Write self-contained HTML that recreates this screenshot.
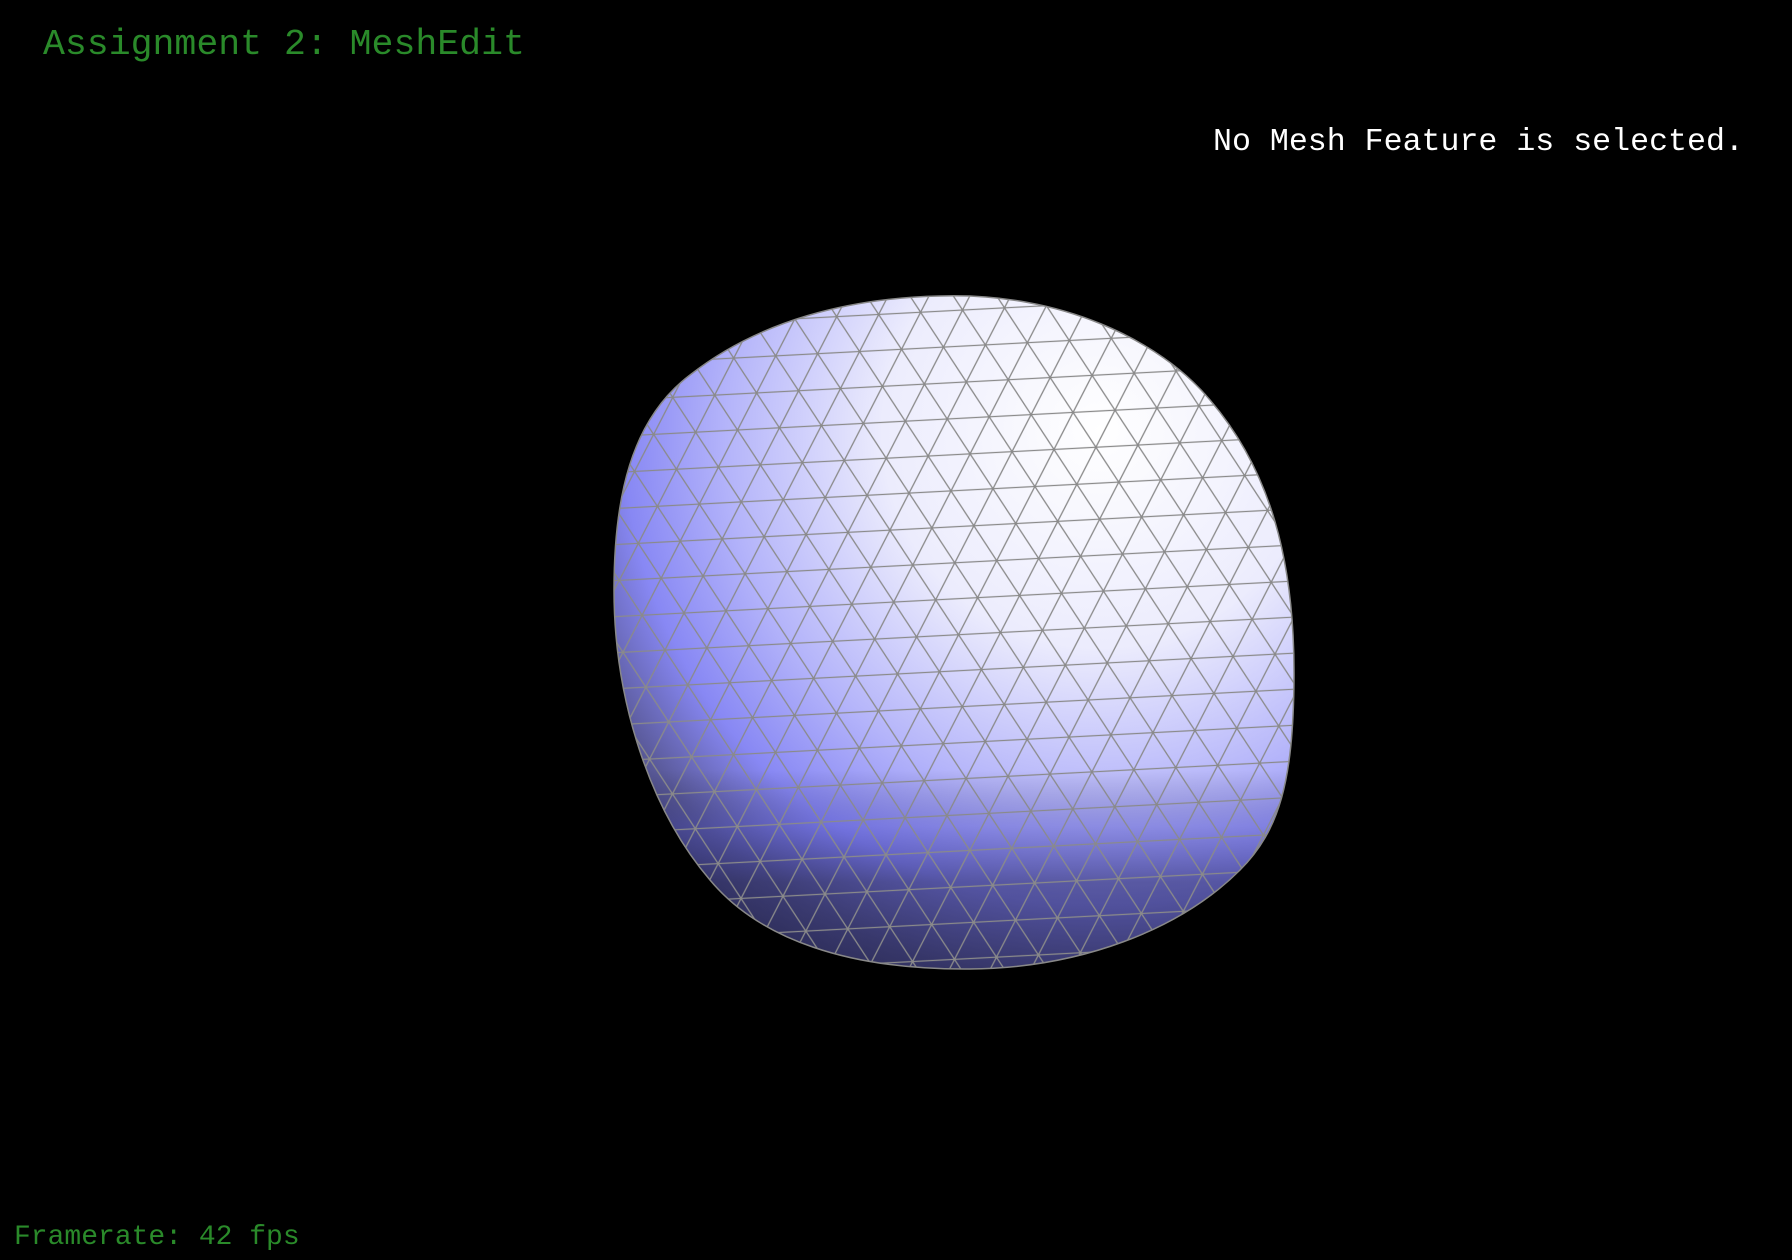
<!DOCTYPE html>
<html><head><meta charset="utf-8"><style>
html,body{margin:0;padding:0;background:#000;width:1792px;height:1260px;overflow:hidden;position:relative}
.t{position:absolute;font-family:"Liberation Mono","DejaVu Sans Mono",monospace;white-space:nowrap}
</style></head><body>
<svg width="1792" height="1260" style="position:absolute;left:0;top:0">
<defs>
<radialGradient id="g" cx="1100" cy="430" r="680" gradientUnits="userSpaceOnUse">
<stop offset="0" stop-color="#ffffff"/>
<stop offset="0.32" stop-color="#ececfd"/>
<stop offset="0.55" stop-color="#b4b4fa"/>
<stop offset="0.7" stop-color="#8888f4"/>
<stop offset="0.82" stop-color="#5a5a9a"/>
<stop offset="1" stop-color="#26263e"/>
</radialGradient>
<linearGradient id="b" x1="0" y1="0" x2="0" y2="1">
<stop offset="0.7" stop-color="#000" stop-opacity="0"/>
<stop offset="0.78" stop-color="#3030a0" stop-opacity="0.25"/>
<stop offset="0.86" stop-color="#202050" stop-opacity="0.5"/>
<stop offset="1" stop-color="#1a1a40" stop-opacity="0.6"/>
</linearGradient>
<pattern id="m" width="42" height="72" patternUnits="userSpaceOnUse" patternTransform="rotate(-3)">
<path d="M-5 0H47M-5 36H47M-5 72H47M0 36L21 0L42 36M0 36L21 72L42 36" stroke="#8a8a8a" stroke-width="1.3" fill="none"/>
</pattern>
<clipPath id="c"><path d="M940 296C1060 292 1160 340 1210 400C1270 470 1295 560 1294 680C1293 780 1280 830 1240 870C1180 930 1080 968 970 969C850 970 760 940 710 880C650 810 614 700 614 590C614 500 630 420 690 375C760 320 850 298 940 296Z"/></clipPath>
</defs>
<g clip-path="url(#c)">
<rect x="600" y="280" width="720" height="700" fill="url(#g)"/>
<rect x="600" y="280" width="720" height="700" fill="url(#b)"/>
<rect x="600" y="280" width="720" height="700" fill="url(#m)"/>
</g>
<path d="M940 296C1060 292 1160 340 1210 400C1270 470 1295 560 1294 680C1293 780 1280 830 1240 870C1180 930 1080 968 970 969C850 970 760 940 710 880C650 810 614 700 614 590C614 500 630 420 690 375C760 320 850 298 940 296Z" fill="none" stroke="#888" stroke-width="1.5"/>
</svg>
<div class="t" style="left:43px;top:24px;font-size:36.5px;color:#2a8a2a">Assignment 2: MeshEdit</div>
<div class="t" style="left:1213px;top:125px;font-size:31.6px;color:#fff">No Mesh Feature is selected.</div>
<div class="t" style="left:14px;top:1222px;font-size:28px;color:#2a8a2a">Framerate: 42 fps</div>
</body></html>
